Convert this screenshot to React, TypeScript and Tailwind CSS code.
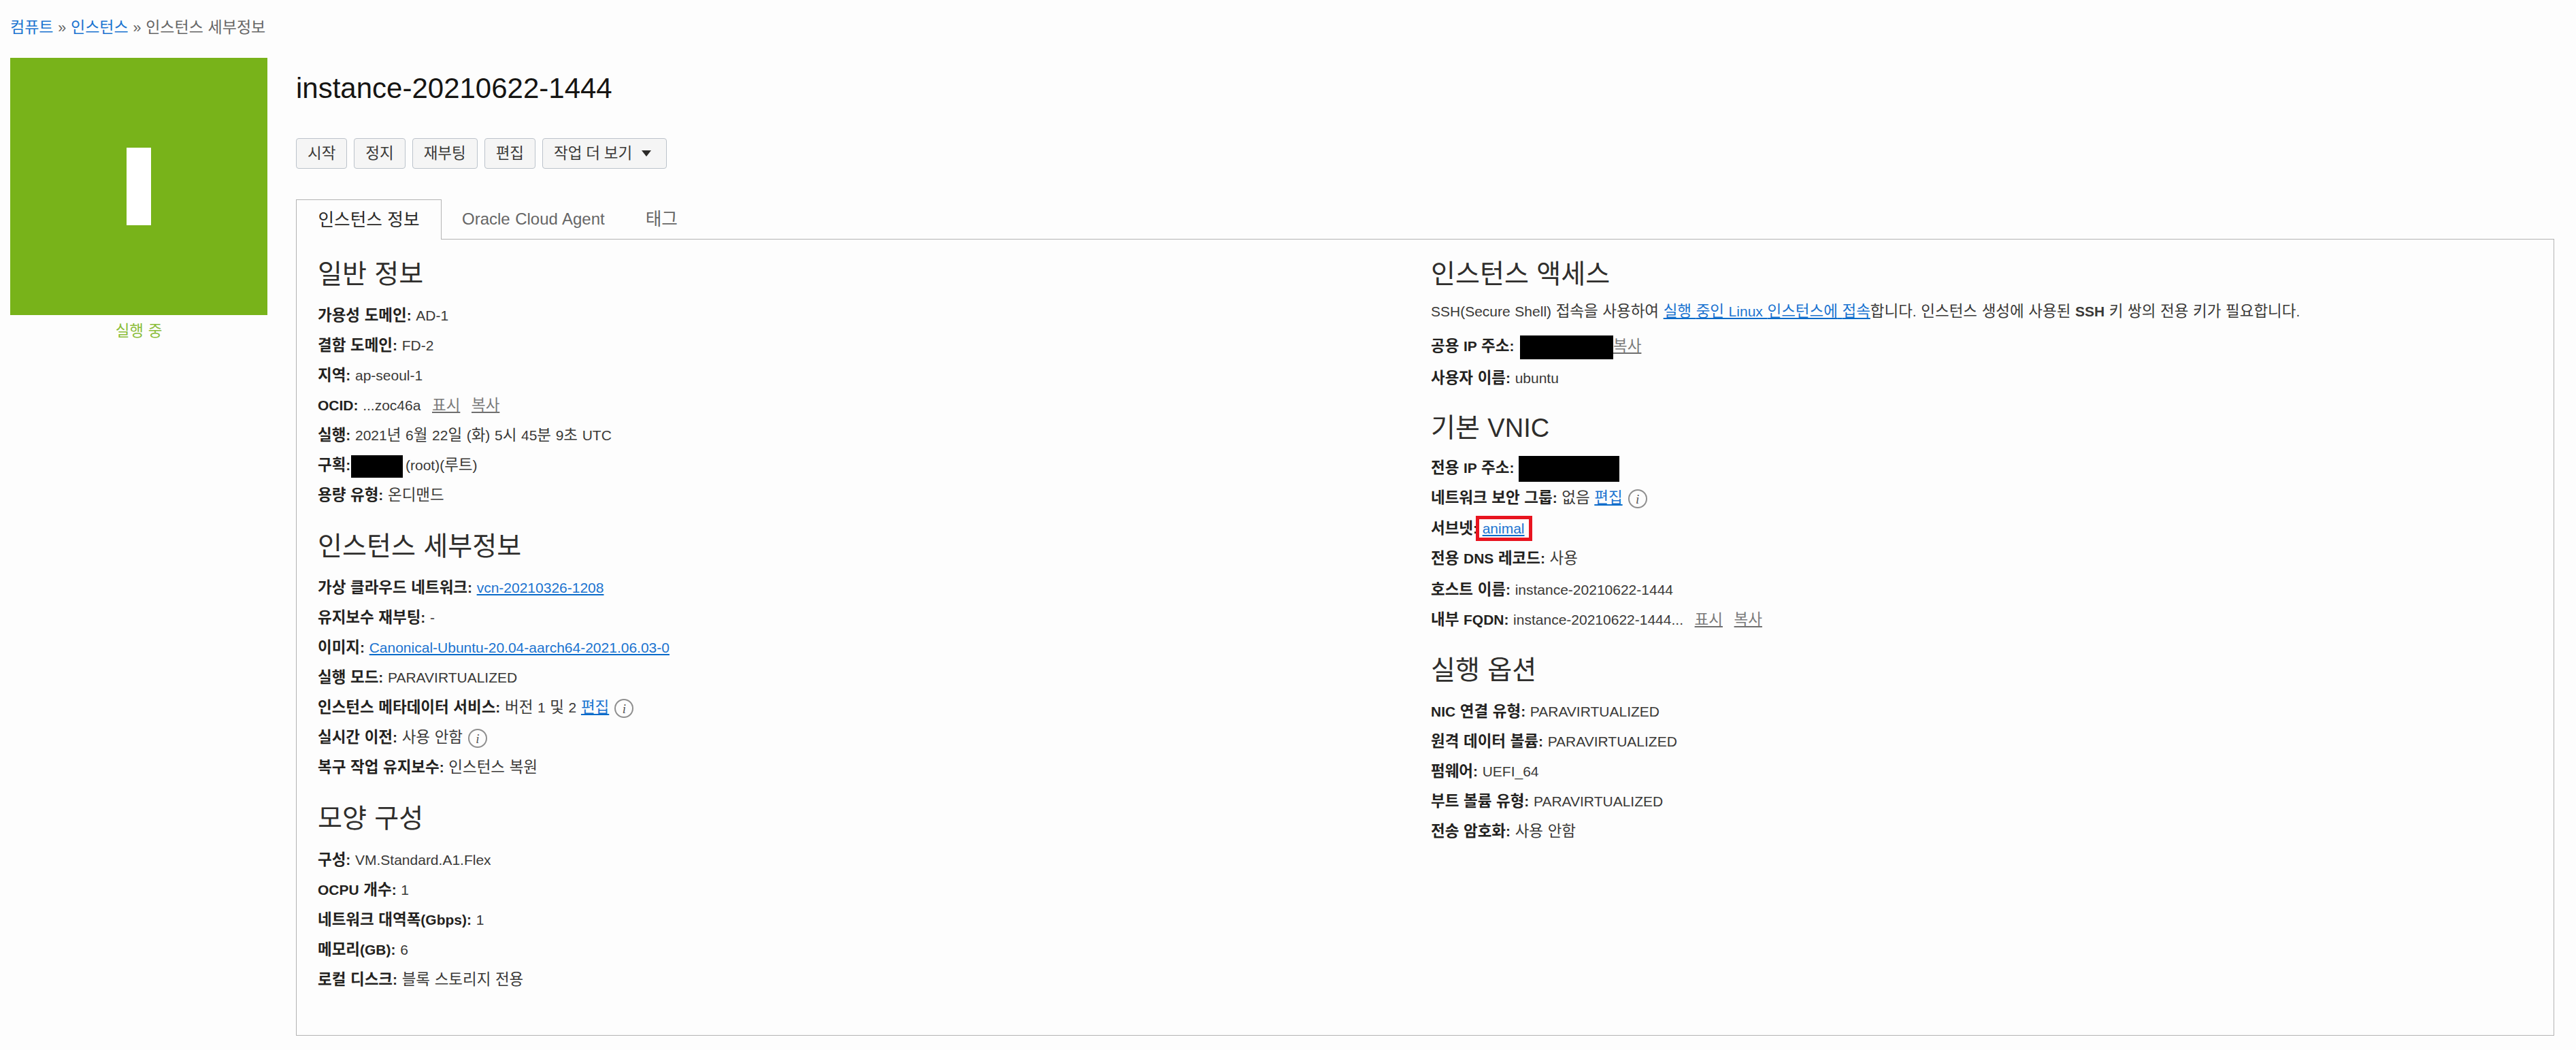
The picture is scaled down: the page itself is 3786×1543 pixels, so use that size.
import React from "react";

function K({ children, className = "text-[1.07em]" }: { children: string; className?: string }) {
  const parts = children.split(/([\uAC00-\uD7A3]+)/);
  return (
    <span>
      {parts.map((p, i) =>
        i % 2 === 1 ? (
          <span key={i} className={className}>
            {p}
          </span>
        ) : (
          <React.Fragment key={i}>{p}</React.Fragment>
        )
      )}
    </span>
  );
}

function Row({
  label,
  children,
  className = "",
}: {
  label: string;
  children?: React.ReactNode;
  className?: string;
}) {
  return (
    <div className={`h-[44px] leading-[44px] whitespace-nowrap ${className}`}>
      <b className="font-bold text-[#232220]">
        <K>{label}</K>
      </b>{" "}
      {children}
    </div>
  );
}

function Heading({ children, className = "" }: { children: string; className?: string }) {
  return (
    <h2 className={`h-[50px] leading-[50px] text-[38px] font-normal text-[#2f2e2c] whitespace-nowrap ${className}`}>
      <K className="text-[1.03em]">{children}</K>
    </h2>
  );
}

function BlueLink({ children }: { children: string }) {
  return (
    <a className="text-[#1a73d0] underline decoration-[#0a6bc9] decoration-2 underline-offset-2">
      <K>{children}</K>
    </a>
  );
}

function GrayLink({ children, className = "" }: { children: string; className?: string }) {
  return (
    <a className={`text-[#7a7a7a] underline decoration-[#6f6f6f] underline-offset-2 ${className}`}>
      <K>{children}</K>
    </a>
  );
}

function Info() {
  return (
    <span className="inline-flex w-[28px] h-[28px] ml-[8px] rounded-full border-2 border-[#8f8f8f] items-center justify-center align-middle italic text-[#555] text-[19px] leading-none font-['Liberation_Serif',serif]">
      i
    </span>
  );
}

function Button({ children, className = "" }: { children: React.ReactNode; className?: string }) {
  return (
    <button className={`h-[45px] pl-[16px] pr-[16px] flex items-center gap-[14px] bg-[#f5f5f5] border border-[#bcc3cb] rounded-[4px] text-[#3a3937] whitespace-nowrap ${className}`}>
      {children}
    </button>
  );
}

export default function App() {
  return (
    <div className="min-h-screen bg-[#fdfdfd] text-[21px] [word-spacing:0.8px] text-[#3a3937] pl-[15px] pr-[32px] pt-[20px] font-['Liberation_Sans','Noto_Sans_CJK_KR',sans-serif]">
      <div className="h-[40px] leading-[40px] mb-[25px] text-[21.5px] text-[#666] whitespace-nowrap">
        <a className="text-[#1a73d0]">
          <K>컴퓨트</K>
        </a>{" "}
        »{" "}
        <a className="text-[#1a73d0]">
          <K>인스턴스</K>
        </a>{" "}
        » <K>인스턴스 세부정보</K>
      </div>

      <div className="flex gap-[42px]">
        <div className="w-[378px] shrink-0">
          <div className="h-[378px] bg-[#78b31a] flex items-center justify-center">
            <div className="w-[36px] h-[114px] bg-white" />
          </div>
          <div className="h-[48px] leading-[48px] text-center text-[#8bbd3a]">
            <K>실행 중</K>
          </div>
        </div>

        <div className="flex-1 min-w-0">
          <h1 className="h-[90px] leading-[90px] text-[42px] font-normal text-[#161513]">instance-20210622-1444</h1>

          <div className="mt-[28px] flex gap-[10px]">
            <Button>
              <K>시작</K>
            </Button>
            <Button>
              <K>정지</K>
            </Button>
            <Button>
              <K>재부팅</K>
            </Button>
            <Button>
              <K>편집</K>
            </Button>
            <Button className="!pr-[22px]">
              <K>작업 더 보기</K>
              <svg width="14" height="9" viewBox="0 0 14 9" className="shrink-0">
                <path d="M0 0H14L7 9Z" fill="#2b2a28" />
              </svg>
            </Button>
          </div>

          <div className="mt-[45px] flex h-[58px] text-[24px]">
            <div className="w-[214px] h-[59px] relative z-10 bg-[#fdfdfd] border border-b-0 border-[#b3b3b3] flex items-center justify-center text-[#2b2a28]">
              <K>인스턴스 정보</K>
            </div>
            <div className="px-[30px] flex items-center text-[#666]">Oracle Cloud Agent</div>
            <div className="px-[30px] flex items-center text-[#666]">
              <K>태그</K>
            </div>
          </div>

          <div className="h-[1171px] border border-[#b3b3b3] pl-[31px] pt-[26px] flex">
            <div className="w-[1636px] shrink-0">
              <section>
                <Heading className="mb-[14px]">일반 정보</Heading>
                <Row label="가용성 도메인:">AD-1</Row>
                <Row label="결함 도메인:">FD-2</Row>
                <Row label="지역:">ap-seoul-1</Row>
                <Row label="OCID:">
                  ...zoc46a <GrayLink className="ml-[10px]">표시</GrayLink> <GrayLink className="ml-[10px]">복사</GrayLink>
                </Row>
                <Row label="실행:">
                  <K>2021년 6월 22일 (화) 5시 45분 9초 UTC</K>
                </Row>
                <Row label="구획:">
                  <span className="inline-block w-[76px] h-[33px] -ml-[6px] mr-[4px] bg-black align-middle" />
                  <K>(root)(루트)</K>
                </Row>
                <Row label="용량 유형:">
                  <K>온디맨드</K>
                </Row>
              </section>
              <section className="mt-[28px]">
                <Heading className="mb-[14px]">인스턴스 세부정보</Heading>
                <Row label="가상 클라우드 네트워크:">
                  <BlueLink>vcn-20210326-1208</BlueLink>
                </Row>
                <Row label="유지보수 재부팅:">-</Row>
                <Row label="이미지:">
                  <BlueLink>Canonical-Ubuntu-20.04-aarch64-2021.06.03-0</BlueLink>
                </Row>
                <Row label="실행 모드:">PARAVIRTUALIZED</Row>
                <Row label="인스턴스 메타데이터 서비스:">
                  <K>버전 1 및 2</K> <BlueLink>편집</BlueLink>
                  <Info />
                </Row>
                <Row label="실시간 이전:">
                  <K>사용 안함</K>
                  <Info />
                </Row>
                <Row label="복구 작업 유지보수:">
                  <K>인스턴스 복원</K>
                </Row>
              </section>
              <section className="mt-[28px]">
                <Heading className="mb-[14px]">모양 구성</Heading>
                <Row label="구성:">VM.Standard.A1.Flex</Row>
                <Row label="OCPU 개수:">1</Row>
                <Row label="네트워크 대역폭(Gbps):">1</Row>
                <Row label="메모리(GB):">6</Row>
                <Row label="로컬 디스크:">
                  <K>블록 스토리지 전용</K>
                </Row>
              </section>
            </div>

            <div className="flex-1 min-w-0">
              <section>
                <Heading className="mb-[8px]">인스턴스 액세스</Heading>
                <div className="h-[44px] leading-[44px] whitespace-nowrap">
                  <K>SSH(Secure Shell) 접속을 사용하여</K> <BlueLink>실행 중인 Linux 인스턴스에 접속</BlueLink>
                  <K>합니다. 인스턴스 생성에 사용된</K> <b className="font-bold">SSH</b>{" "}
                  <K>키 쌍의 전용 키가 필요합니다.</K>
                </div>
                <Row label="공용 IP 주소:" className="mt-[5px] !h-[47px] !leading-[47px]">
                  <span className="inline-block w-[137px] h-[35px] ml-[2px] bg-black align-middle" />
                  <GrayLink>복사</GrayLink>
                </Row>
                <Row label="사용자 이름:" className="mt-[2px]">
                  ubuntu
                </Row>
              </section>
              <section className="mt-[26px]">
                <Heading className="mb-[12px]">기본 VNIC</Heading>
                <Row label="전용 IP 주소:">
                  <span className="inline-block w-[148px] h-[38px] bg-black align-middle" />
                </Row>
                <Row label="네트워크 보안 그룹:">
                  <K>없음</K> <BlueLink>편집</BlueLink>
                  <Info />
                </Row>
                <Row label="서브넷:" className="!h-[45px] !leading-[45px]">
                  <span className="relative">
                    <BlueLink>animal</BlueLink>
                    <span className="absolute -left-[10px] -right-[11px] -top-[7px] -bottom-[7px] border-[5px] border-[#e8141f]" />
                  </span>
                </Row>
                <Row label="전용 DNS 레코드:">
                  <K>사용</K>
                </Row>
                <Row label="호스트 이름:" className="mt-[2px]">
                  instance-20210622-1444
                </Row>
                <Row label="내부 FQDN:">
                  instance-20210622-1444... <GrayLink className="ml-[10px]">표시</GrayLink>{" "}
                  <GrayLink className="ml-[10px]">복사</GrayLink>
                </Row>
              </section>
              <section className="mt-[27px]">
                <Heading className="mb-[14px]">실행 옵션</Heading>
                <Row label="NIC 연결 유형:">PARAVIRTUALIZED</Row>
                <Row label="원격 데이터 볼륨:">PARAVIRTUALIZED</Row>
                <Row label="펌웨어:">UEFI_64</Row>
                <Row label="부트 볼륨 유형:">PARAVIRTUALIZED</Row>
                <Row label="전송 암호화:">
                  <K>사용 안함</K>
                </Row>
              </section>
            </div>
          </div>
        </div>
      </div>
    </div>
  );
}
